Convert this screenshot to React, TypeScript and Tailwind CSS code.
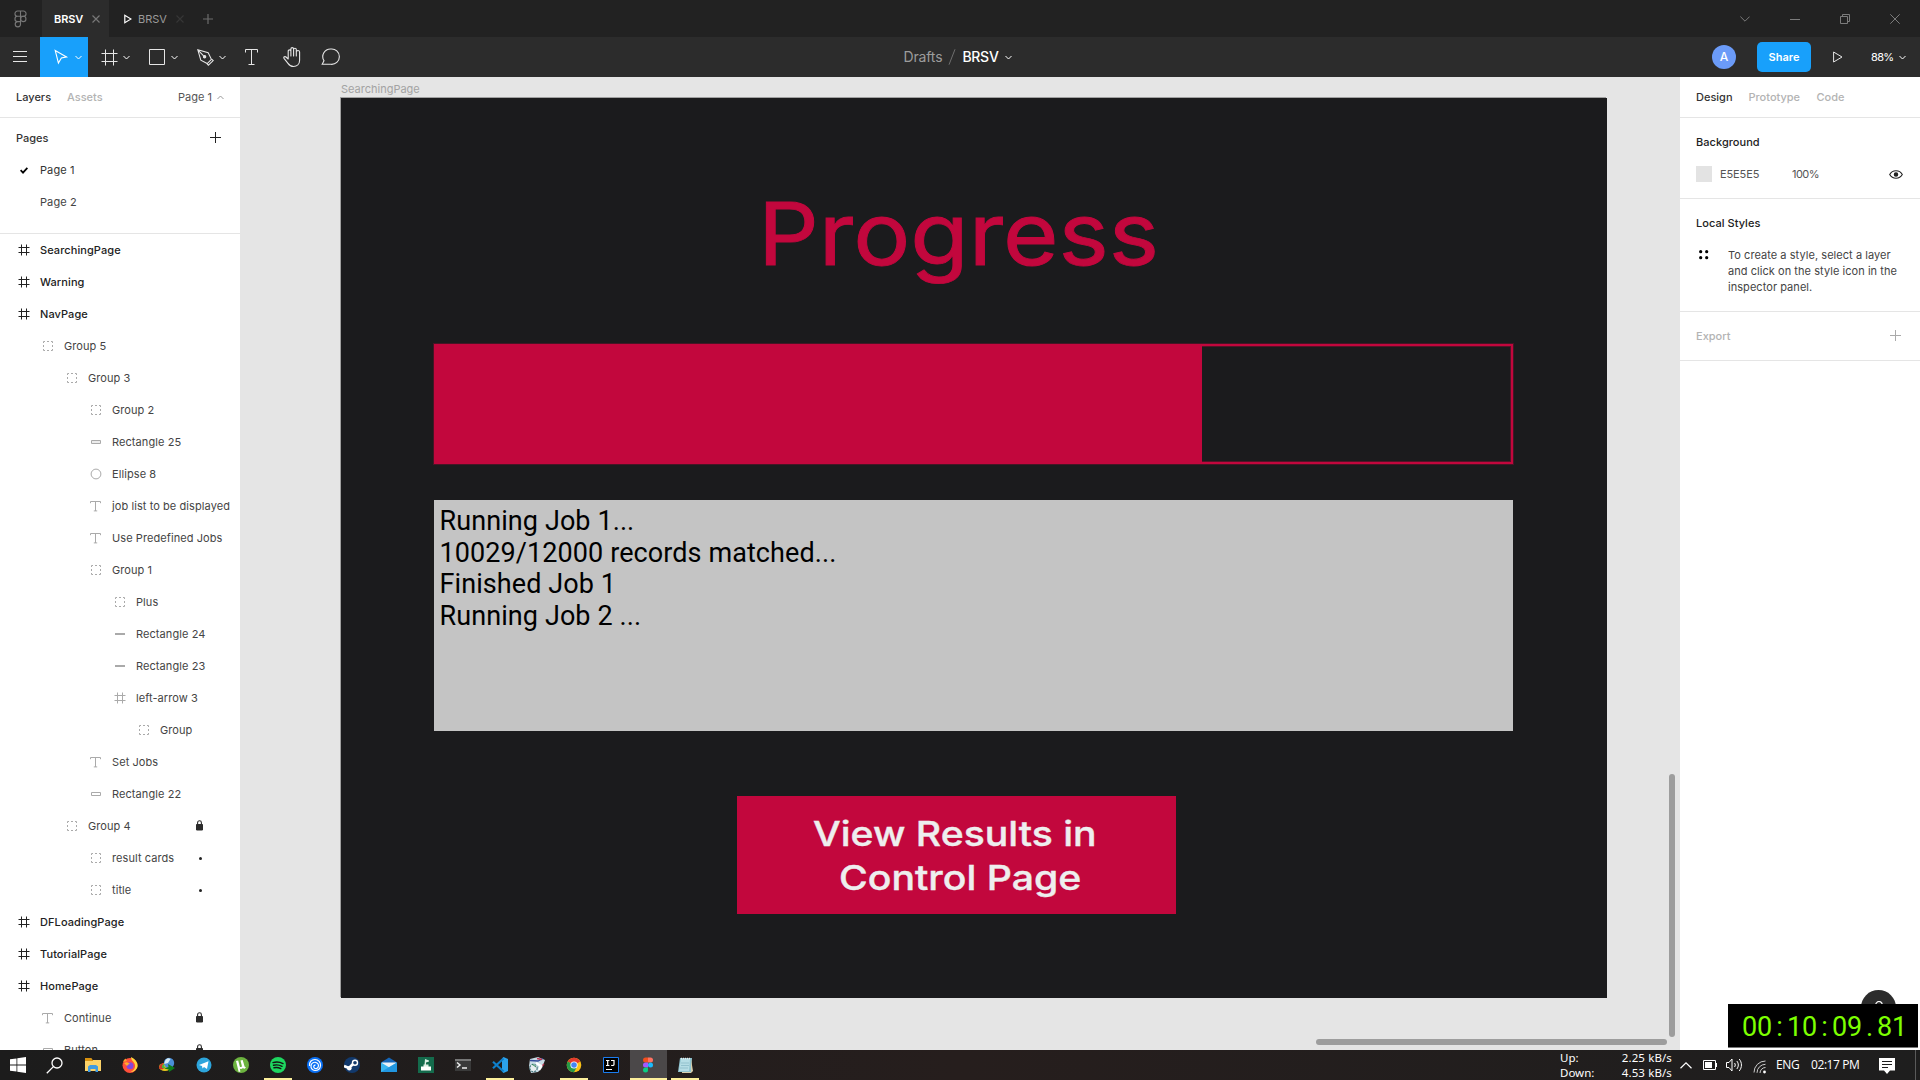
import type { ReactNode } from 'react';

type IconKind = 'frame' | 'group' | 'rect' | 'rectFill' | 'line' | 'ellipse' | 'text';

interface Layer {
  name: string;
  depth: number;
  icon: IconKind;
  mark?: 'lock' | 'dot';
}

const layers: Layer[] = [
  { name: 'SearchingPage', depth: 0, icon: 'frame' },
  { name: 'Warning', depth: 0, icon: 'frame' },
  { name: 'NavPage', depth: 0, icon: 'frame' },
  { name: 'Group 5', depth: 1, icon: 'group' },
  { name: 'Group 3', depth: 2, icon: 'group' },
  { name: 'Group 2', depth: 3, icon: 'group' },
  { name: 'Rectangle 25', depth: 3, icon: 'rectFill' },
  { name: 'Ellipse 8', depth: 3, icon: 'ellipse' },
  { name: 'job list to be displayed', depth: 3, icon: 'text' },
  { name: 'Use Predefined Jobs', depth: 3, icon: 'text' },
  { name: 'Group 1', depth: 3, icon: 'group' },
  { name: 'Plus', depth: 4, icon: 'group' },
  { name: 'Rectangle 24', depth: 4, icon: 'line' },
  { name: 'Rectangle 23', depth: 4, icon: 'line' },
  { name: 'left-arrow 3', depth: 4, icon: 'frame' },
  { name: 'Group', depth: 5, icon: 'group' },
  { name: 'Set Jobs', depth: 3, icon: 'text' },
  { name: 'Rectangle 22', depth: 3, icon: 'rect' },
  { name: 'Group 4', depth: 2, icon: 'group', mark: 'lock' },
  { name: 'result cards', depth: 3, icon: 'group', mark: 'dot' },
  { name: 'title', depth: 3, icon: 'group', mark: 'dot' },
  { name: 'DFLoadingPage', depth: 0, icon: 'frame' },
  { name: 'TutorialPage', depth: 0, icon: 'frame' },
  { name: 'HomePage', depth: 0, icon: 'frame' },
  { name: 'Continue', depth: 1, icon: 'text', mark: 'lock' },
  { name: 'Button', depth: 1, icon: 'rect', mark: 'lock' },
];

function Chevron({ className = '', up = false, w = 7 }: { className?: string; up?: boolean; w?: number }) {
  return (
    <svg width={w} height="5" viewBox="0 0 7 5" fill="none" stroke="currentColor" preserveAspectRatio="none" className={`shrink-0 ${className}`}>
      <path d={up ? 'M.5 4L3.5 1L6.5 4' : 'M.5 1L3.5 4L6.5 1'} />
    </svg>
  );
}

function LayerIcon({ kind }: { kind: IconKind }) {
  return (
    <svg width="12" height="12" viewBox="0 0 12 12" fill="none" stroke="currentColor" className="shrink-0">
      {kind === 'frame' && <path d="M3.5 .5v11M8.5 .5v11M.5 3.5h11M.5 8.5h11" />}
      {kind === 'group' && (
        <path d="M1.5 3v-1.5h1.5M5 1.5h2M9 1.5h1.5v1.5M10.5 5v2M10.5 9v1.5h-1.5M7 10.5h-2M3 10.5h-1.5v-1.5M1.5 7v-2" />
      )}
      {kind === 'rect' && <path d="M1.5 4.5h9v3h-9z" />}
      {kind === 'rectFill' && <path d="M1.5 4.5h9v3h-9z" fill="#ececec" />}
      {kind === 'line' && <path d="M1 6h10" strokeWidth="2" />}
      {kind === 'ellipse' && <circle cx="6" cy="6" r="4.9" />}
      {kind === 'text' && <path d="M.5 3.2V1.5h10v1.7M5.5 1.5v9.5M3.8 10.9h3.4" />}
    </svg>
  );
}

function LockIcon() {
  return (
    <svg width="8" height="11" viewBox="0 0 8 11" fill="none" className="mb-px">
      <path d="M.5 4.5h6v5.5h-6z" fill="#2b2b2b" stroke="#2b2b2b" />
      <path d="M1.6 4.500V2.700a1.900 1.900 0 0 1 3.800 0v1.800" stroke="#2b2b2b" strokeWidth="1.100" />
    </svg>
  );
}

function TitleBar() {
  return (
    <div className="flex h-[37px] items-center bg-[#222222] text-[11px] leading-4">
      <div className="flex w-[42px] justify-center pr-[2px] pt-px">
        <svg width="13" height="18" viewBox="0 0 13 18" fill="none" stroke="#777" strokeWidth="1.1">
          <path d="M6.5 1H3.6a2.65 2.65 0 0 0 0 5.3h2.9zM6.5 1h2.9a2.65 2.65 0 0 1 0 5.3H6.5zM6.5 6.3H3.6a2.65 2.65 0 0 0 0 5.3h2.9zM6.5 11.6H3.6a2.65 2.65 0 1 0 2.9 2.65z" />
          <circle cx="9.3" cy="8.95" r="2.65" />
        </svg>
      </div>
      <div className="flex h-full w-[67px] items-center bg-[#2c2c2c] pl-3 pt-px font-semibold text-white">
        <span className="w-[38px] tracking-[-0.01em]">BRSV</span>
        <svg width="8" height="8" viewBox="0 0 8 8" stroke="#777" strokeWidth="1.2"><path d="M.5 .5l7 7M7.5 .5l-7 7" /></svg>
      </div>
      <div className="flex items-center pl-[15px] pt-px text-[#9a9a9a]">
        <svg width="8" height="10" viewBox="0 0 8 10" fill="none" stroke="#fff" strokeWidth="1.2"><path d="M.8 1.2v7.6L7 5z" /></svg>
        <span className="ml-[6px] w-[38px]">BRSV</span>
        <svg width="8" height="8" viewBox="0 0 8 8" stroke="#363636" strokeWidth="1.2"><path d="M.5 .5l7 7M7.5 .5l-7 7" /></svg>
        <svg width="10" height="10" viewBox="0 0 10 10" stroke="#6c6c6c" strokeWidth="1.2" className="ml-[19px]"><path d="M5 0v10M0 5h10" /></svg>
      </div>
      <div className="ml-auto flex items-center gap-10 pr-5 text-[#7c7c7c]">
        <svg width="10" height="6" viewBox="0 0 10 6" fill="none" stroke="currentColor"><path d="M.4 .6L5 5.2L9.6 .6" /></svg>
        <svg width="10" height="10" viewBox="0 0 10 10" stroke="currentColor"><path d="M0 5.5h10" /></svg>
        <svg width="10" height="10" viewBox="0 0 10 10" fill="none" stroke="currentColor"><path d="M.5 2.5h7v7h-7zM2.5 2.5v-2h7v7h-2" /></svg>
        <svg width="10" height="10" viewBox="0 0 10 10" stroke="currentColor"><path d="M.3 .3l9.4 9.4M9.7 .3L.3 9.7" /></svg>
      </div>
    </div>
  );
}

function Tool({ children, active = false }: { children: ReactNode; active?: boolean }) {
  return (
    <div className={active ? 'flex h-10 w-12 items-center bg-[#18a0fb] pl-[14px]' : 'flex h-10 w-12 items-center pl-[13px]'}>
      <div className="flex w-[19px] justify-start">{children}</div>
      <Chevron className={active ? 'ml-[2px] mt-px' : 'ml-[3px] mt-px'} />
    </div>
  );
}

function ToolBar() {
  return (
    <div className="grid h-10 grid-cols-[1fr_auto_1fr] items-center bg-[#2c2c2c] text-white">
      <div className="flex items-center">
        <div className="flex w-10 pl-[13px]">
          <svg width="14" height="12" viewBox="0 0 14 12" stroke="#e6e6e6"><path d="M0 .5h14M0 5.5h14M0 10.5h14" /></svg>
        </div>
        <Tool active>
          <svg width="15" height="16" viewBox="0 0 15 16" fill="none" stroke="#fff" strokeWidth="1.1"><path d="M1.2 1.4L12.6 7.9L7.4 9L4.4 14z" /></svg>
        </Tool>
        <Tool>
          <svg width="17" height="17" viewBox="0 0 17 17" stroke="#e6e6e6"><path d="M4.5 .5v16M12.5 .5v16M.5 4.5h16M.5 12.5h16" /></svg>
        </Tool>
        <Tool>
          <svg width="17" height="17" viewBox="0 0 17 17" fill="none" stroke="#e6e6e6"><path d="M.5 .5h15v15h-15z" /></svg>
        </Tool>
        <Tool>
          <svg width="17" height="17" viewBox="0 0 17 17" fill="none" stroke="#e6e6e6" strokeWidth="1.05">
            <path d="M.8 .8L11.2 3.8L14.4 10.3L10.2 14.5L3.8 11.2zM.8 .8L6.6 6.8" />
            <circle cx="7.6" cy="7.8" r="1.2" fill="#e6e6e6" />
            <path d="M14.6 10.2l1.6 1.4-4.8 4.6-1.4-1.6" />
          </svg>
        </Tool>
        <svg width="14" height="17" viewBox="0 0 14 17" fill="none" stroke="#e6e6e6" className="ml-[13px]"><path d="M.5 3.5V.5h12v3M6.5 .5v15.5M3.5 15.5h6" /></svg>
        <svg width="19" height="21" viewBox="0 0 19 21" fill="none" stroke="#e6e6e6" strokeWidth="1.1" strokeLinecap="round" strokeLinejoin="round" className="ml-[24px]">
          <path d="M5.2 11.5V4.2a1.3 1.3 0 0 1 2.7 0V9M7.9 9V2a1.35 1.35 0 0 1 2.7 0v7M10.600 9V2.600a1.350 1.350 0 0 1 2.700 0V9M13.300 9V5.200a1.500 1.500 0 0 1 3.300-.1v8.200c0 4-2.800 6.200-6.100 6.200-2.600 0-4.100-1-5.500-3.100L1 11.300c-.7-1.3.9-2.3 2-1.3l2.200 2" />
        </svg>
        <svg width="19" height="18" viewBox="0 0 19 18" fill="none" stroke="#e6e6e6" strokeWidth="1.1" className="ml-[19px]">
          <path d="M9.8 1A7.7 7.7 0 1 1 9.8 16.3H1.2L3 12.8A7.7 7.7 0 0 1 9.8 1z" />
        </svg>
      </div>
      <div className="flex items-center pr-[5px] text-[14px] leading-5">
        <span className="tracking-[-0.01em] text-[#9c9c9c]">Drafts</span>
        <svg width="8" height="16" viewBox="0 0 8 16" stroke="#6f6f6f" className="ml-[6px]"><path d="M7 .3L1 15.7" /></svg>
        <span className="ml-[6px] font-medium tracking-[-0.02em]">BRSV</span>
        <Chevron className="ml-[6px] mt-px" />
      </div>
      <div className="flex items-center justify-end pr-[14px] text-[11px] leading-4">
        <div className="flex size-6 items-center justify-center rounded-full bg-[#6b9bf8] text-[12px] font-medium">A</div>
        <div className="ml-[21px] flex h-[30px] w-[54px] items-center justify-center rounded-[5px] bg-[#18a0fb] font-semibold">Share</div>
        <svg width="10" height="12" viewBox="0 0 10 12" fill="none" stroke="#e6e6e6" className="ml-[22px]"><path d="M.6 1v10L9 6z" /></svg>
        <span className="ml-[28px] w-[28px] font-normal tracking-[-0.06em]">88%</span>
        <Chevron className="mt-px" />
      </div>
    </div>
  );
}

function LeftPanel() {
  return (
    <div className="flex w-60 shrink-0 flex-col overflow-hidden bg-white text-[11px] leading-4 text-[#333]">
      <div className="flex h-[41px] shrink-0 items-center border-b border-[#e5e5e5] px-4">
        <span className="w-[51px] font-medium">Layers</span>
        <span className="font-medium text-[#b3b3b3]">Assets</span>
        <span className="ml-auto text-[#555]">Page 1</span>
        <Chevron up className="ml-[5px] text-[#999]" />
      </div>
      <div className="flex h-[116px] shrink-0 flex-col border-b border-[#e5e5e5] pt-1">
        <div className="flex h-8 items-center justify-between pl-4 pr-[19px]">
          <span className="font-medium">Pages</span>
          <svg width="11" height="11" viewBox="0 0 11 11" stroke="#222" className="mb-[2px]"><path d="M5.5 0v11M0 5.5h11" /></svg>
        </div>
        <div className="flex h-8 items-center pl-5">
          <svg width="8" height="7" viewBox="0 0 8 7" fill="none" stroke="#000" strokeWidth="1.8"><path d="M.6 3.2L3 5.6L7.4 .9" /></svg>
          <span className="ml-3 tracking-[0.09px]">Page 1</span>
        </div>
        <div className="flex h-8 items-center pl-10 tracking-[0.09px] text-[#444]">Page 2</div>
      </div>
      <div className="flex flex-col">
        {layers.map((l) => (
          <div key={l.name} className="flex h-8 shrink-0 items-center pr-9" style={{ paddingLeft: 18 + l.depth * 24 }}>
            <span className={l.depth === 0 ? 'text-[#222]' : 'text-[#aaa]'}>
              <LayerIcon kind={l.icon} />
            </span>
            <span className={l.depth === 0 ? 'ml-[10px] whitespace-nowrap font-medium tracking-[0.08px] text-[#222]' : 'ml-[10px] whitespace-nowrap tracking-[0.08px] text-[#444]'}>{l.name}</span>
            {l.mark === 'lock' && <span className="ml-auto"><LockIcon /></span>}
            {l.mark === 'dot' && <span className="ml-auto mr-[2px] size-[3px] rounded-full bg-[#222]" />}
          </div>
        ))}
      </div>
    </div>
  );
}

function Canvas() {
  return (
    <div className="relative flex-1 overflow-hidden bg-[#e5e5e5]">
      <span className="absolute left-[101px] top-1 text-[11px] leading-4 text-[#a3a3a3]">SearchingPage</span>
      <div className="absolute left-[101px] top-[21px] h-[900px] w-[1266px] bg-[#1b1b1d] shadow-[-1px_-1px_0_0_rgba(0,0,0,0.3)]">
        <div className="absolute left-[416.5px] top-[86px] origin-left scale-x-[1.095] whitespace-nowrap text-[87px] font-normal leading-[100px] text-[#c2073d] [-webkit-text-stroke:0.9px_#c2073d]">
          Progress
        </div>
        <div className="absolute left-[93px] top-[246px] flex h-[120px] w-[1079px] border-2 border-[#c2073d] shadow-[0_0_0_1px_#c2073d44,inset_0_0_0_1px_#c2073d55]">
          <div className="w-[766px] bg-[#c2073d]" />
        </div>
        <div className="absolute left-[93px] top-[402px] h-[231px] w-[1079px] bg-[#c4c4c4] pl-[5.5px] pt-[6px] font-['Roboto'] text-[27px] leading-[31.67px] tracking-[0.09px] text-black">
          <p>Running Job 1...</p>
          <p>10029/12000 records matched...</p>
          <p>Finished Job 1</p>
          <p>Running Job 2 ...</p>
        </div>
        <div className="absolute left-[396px] top-[698px] flex h-[118px] w-[439px] flex-col bg-[#c2073d] pt-[16px] text-[34.4px] font-medium leading-[44px] text-[#eeeeee] [-webkit-text-stroke:0.4px_#eeeeee]">
          <span className="ml-[75.5px] origin-left scale-x-[1.138] whitespace-nowrap">View Results in</span>
          <span className="ml-[101.5px] origin-left scale-x-[1.14] whitespace-nowrap">Control Page</span>
        </div>
      </div>
      <div className="absolute bottom-[13px] right-[5px] h-[263px] w-[6px] rounded-full bg-[#9d9d9d]" />
      <div className="absolute bottom-[5px] right-[13px] h-[6px] w-[351px] rounded-full bg-[#9d9d9d]" />
    </div>
  );
}

function RightPanel() {
  return (
    <div className="relative flex w-60 shrink-0 flex-col bg-white text-[11px] leading-4 text-[#333]">
      <div className="flex h-[41px] items-center border-b border-[#e5e5e5] pl-4 font-medium">
        <span className="w-[52.5px]">Design</span>
        <span className="w-[68px] text-[#b3b3b3]">Prototype</span>
        <span className="text-[#b3b3b3]">Code</span>
      </div>
      <div className="flex h-[81px] flex-col border-b border-[#e5e5e5] pl-4 pt-2">
        <div className="flex h-8 items-center font-medium tracking-[0.04px] text-[#222]">Background</div>
        <div className="flex h-8 items-center text-[#555]">
          <span className="size-4 bg-[#e3e3e3]" />
          <span className="ml-2 w-[72px] tracking-[-0.01em]">E5E5E5</span>
          <span className="tracking-[-0.05em]">100%</span>
          <svg width="14" height="9" viewBox="0 0 14 9" fill="none" stroke="#222" strokeWidth="1.1" className="ml-auto mr-[17px]">
            <path d="M.7 4.5C3.5-.5 10.5-.5 13.3 4.5C10.5 9.5 3.5 9.5 .7 4.5z" />
            <circle cx="7" cy="4.5" r="1.7" fill="#222" />
          </svg>
        </div>
      </div>
      <div className="flex h-[113px] flex-col border-b border-[#e5e5e5] pl-4 pt-2">
        <div className="flex h-8 items-center font-medium tracking-[0.04px] text-[#222]">Local Styles</div>
        <div className="flex pt-2">
          <svg width="10" height="10" viewBox="0 0 10 10" className="ml-[3px] mt-[3px]">
            <circle cx="1.7" cy="1.7" r="1.6" /><circle cx="7.7" cy="1.7" r="1.6" /><circle cx="1.7" cy="7.7" r="1.6" /><circle cx="7.7" cy="7.7" r="1.6" />
          </svg>
          <div className="ml-[19px] whitespace-nowrap tracking-[0.05px] text-[#444]">
            <p>To create a style, select a layer</p>
            <p>and click on the style icon in the</p>
            <p>inspector panel.</p>
          </div>
        </div>
      </div>
      <div className="flex h-[49px] items-center justify-between border-b border-[#e5e5e5] pl-4 pr-[19px]">
        <span className="font-medium text-[#b3b3b3]">Export</span>
        <svg width="11" height="11" viewBox="0 0 11 11" stroke="#aaa" className="mb-px"><path d="M5.5 0v11M0 5.5h11" /></svg>
      </div>
      <div className="absolute bottom-[25px] right-[24px] flex size-[35px] justify-center rounded-full bg-[#2c2c2c] pt-[11px]">
        <svg width="8" height="13" viewBox="0 0 8 13" fill="none" stroke="#fff" strokeWidth="1.200"><path d="M.7 3.800a3.300 3.300 0 1 1 5 2.800C4.500 7.300 4 7.700 4 9M4 11v1.500" /></svg>
      </div>
      <div className="absolute bottom-[2px] right-[2px] flex h-[44px] w-[190px] border-b border-[#777] bg-black pl-[14px] pt-[4px] font-['Roboto'] text-[27px] leading-[38px] text-[#7dff00]">
        {'00:10:09.81'.split('').map((c, i) => (
          <span key={i} className="flex w-[15px] justify-center">{c}</span>
        ))}
      </div>
    </div>
  );
}

const taskApps: { id: string; state?: 'open' | 'active'; icon: ReactNode }[] = [
  { id: 'explorer', icon: <><path d="M0 1h6l1.500 2H16v11H0z" fill="#fbd268" /><path d="M0 1h6l1.500 2H8v1H0z" fill="#d9920f" /><path d="M3 15V9.500L5 8h6l2 1.500V15h-2.500v-3h-5v3z" fill="#3f9be0" /></> },
  { id: 'firefox', icon: <><circle cx="8" cy="8.500" r="7.500" fill="#ff4f3a" /><path d="M9 0c5 2.500 7 6 6.500 10-1 3-4 5-7 5 4-1.500 5.500-5 4-8.500C11 4 9 3 9 0z" fill="#ffd43a" /><path d="M1 5C2 2.500 3 2 3.500 1.500L5 4z" fill="#ffa02c" /><circle cx="8" cy="8.700" r="3.500" fill="#8546dd" /><path d="M2 6c3-2 5 0 6 1-2 0-2 1-3 2z" fill="#ffab2e" /></> },
  { id: 'idm', icon: <><ellipse cx="6" cy="10" rx="6" ry="4" fill="#e8c91d" /><circle cx="10" cy="6" r="5.200" fill="#4a8fd8" /><path d="M6.500 3c1.500-2 3.500-2 5-1l-2.500 4-4 1z" fill="#d8ecf5" /><path d="M0 11c0-3 3-5 5-5-2 2-2 4 0 5.500C3 13 0 12.500 0 11z" fill="#ce3b26" /><path d="M3 11c-.5-2 1-4 2.500-4.500C4.500 8.500 5 10 7 11z" fill="#48b83a" /><path d="M9 7l7 4-6 4-.5-2.500L5 11.500l4.500-1.500z" fill="#0f7d1c" /></> },
  { id: 'telegram', icon: <><circle cx="8" cy="8" r="7.500" fill="#2da5dc" /><path d="M3 8l9.500-3.800L11 12 8 10l-1.500 1.500L6 9z" fill="#fff" /></> },
  { id: 'utorrent', icon: <><circle cx="8" cy="8" r="8" fill="#6cb33f" /><path d="M3 4l2.200-.5 1.600 6c.4 1 2.400.8 2-.8L7.500 3.500l2.200-.5 1.900 6.500 1.400 1-1.500 1.200c-.8 0-1.200-.3-1.500-.8-1 1-2 1.200-3.200.9l.6 2.700-1.700.5z" fill="#fff" /></> },
  { id: 'spotify', state: 'open', icon: <><circle cx="8" cy="8" r="8" fill="#1ed760" /><path d="M3 5.600c3.500-1 7-.6 10 1M3.500 8.300c3-.8 5.800-.5 8.500 1M4 10.800c2.500-.6 4.700-.3 6.800.8" stroke="#141414" strokeWidth="1.400" fill="none" strokeLinecap="round" /></> },
  { id: 'ubisoft', icon: <><circle cx="8" cy="8" r="8" fill="#0a70f5" /><path d="M2.500 9C2 5 4.500 2.500 8 2.500s5.800 3 5.500 6S11 13.500 8 13.500 3.800 11 4 8.800 6 5 8.500 5.300s3.500 2.700 2.700 4.700-3 2-4 .8-.4-2.800 1.300-2.600" stroke="#fff" strokeWidth="1.200" fill="none" /></> },
  { id: 'steam', icon: <><circle cx="8" cy="8" r="8" fill="#12396c" /><path d="M0 9l5 2 4-4" stroke="#fff" strokeWidth="2.600" fill="none" /><circle cx="5.300" cy="11.300" r="2.300" fill="#fff" /><circle cx="11" cy="5.700" r="2.500" fill="#12396c" stroke="#fff" strokeWidth="1.400" /></> },
  { id: 'mail', icon: <><path d="M0 5.500L8 .5l8 5V15H0z" fill="#1566b8" /><path d="M1 5.500h14v3L8 11 1 8.500z" fill="#e9f1f8" /><path d="M0 5.500l8 4.800 8-4.800V15H0z" fill="#39b5f0" /><path d="M0 15L16 5.500V15z" fill="#2196e0" /></> },
  { id: 'golf', icon: <><path d="M0 0h16v16H0z" fill="#146b4c" /><path d="M7 2l4 1.500v1L8 5.500V8H6.500zM5.500 7.500h5v2.500h-5z" fill="#dcefe4" /><path d="M3 9.500h10v4H3z" fill="#fff" /></> },
  { id: 'terminal', icon: <><path d="M0 2h16v12H0z" fill="#3a3a3a" /><path d="M0 2h16v2H0z" fill="#777" /><path d="M2 5.500l3 2.500-3 2.500M7 11h5" stroke="#eee" strokeWidth="1.500" fill="none" /></> },
  { id: 'vscode', state: 'open', icon: <><path d="M11.500 0L16 2v12l-4.500 2L10 14.500V1.500z" fill="#2ba2ec" /><path d="M11.500 1.500L1 11.200M1 4.800l10.500 9.700" stroke="#0f80cb" strokeWidth="2.200" /></> },
  { id: 'bike', icon: <><path d="M1 2l8-2 7 3-3 8-4 4-7 1L0 9z" fill="#c9dce6" /><circle cx="4.500" cy="11" r="3.700" fill="#e8eef0" stroke="#4d7f86" strokeWidth="1.200" strokeDasharray="2 1" /><path d="M1 3.500l8 .5 5-2.500" stroke="#334a9a" strokeWidth="1.300" fill="none" /><path d="M8 1.500l5 1M13 9l2-2" stroke="#bd3550" strokeWidth="1.300" /><path d="M7 6l5 3-2 4" stroke="#fff" strokeWidth="2.400" fill="none" /><path d="M3 7l4 3" stroke="#2d8a55" strokeWidth="1" /></> },
  { id: 'chrome', state: 'open', icon: <><circle cx="8" cy="8" r="7.300" fill="#fbc116" /><path d="M8 8L1.700 4.400A7.300 7.300 0 0 1 14.300 4.400z" fill="#e33b2e" /><path d="M8 8L1.700 4.400A7.300 7.300 0 0 0 8 15.300L11 9.800z" fill="#269a48" /><circle cx="8" cy="8" r="3.600" fill="#fff" /><circle cx="8" cy="8" r="2.800" fill="#4285f4" /></> },
  { id: 'intellij', icon: <><path d="M.5 .5h15v15H.5z" fill="#000" stroke="#1c7df0" /><path d="M3 3.500h3.400M4.700 3.500v5M3 8.500h3.400M8 3.500h3v4c0 1-1.500 1.300-2.800.7M3 12.500h6" stroke="#fff" strokeWidth="1.200" fill="none" /></> },
  { id: 'figma', state: 'active', icon: <><path d="M8 .5H5.500a2.500 2.500 0 0 0 0 5H8z" fill="#f24e1e" /><path d="M8 .5h2.500a2.500 2.500 0 0 1 0 5H8z" fill="#ff7262" /><path d="M8 5.500H5.500a2.500 2.500 0 0 0 0 5H8z" fill="#a259ff" /><circle cx="10.500" cy="8" r="2.500" fill="#1abcfe" /><path d="M8 10.500H5.500A2.500 2.500 0 1 0 8 13z" fill="#0acf83" /></> },
  { id: 'notepad', state: 'open', icon: <><path d="M3 1h12l-1 14H1z" fill="#8fc3cf" /><path d="M4 2h9l-1 12H2z" fill="#b5dde5" /><path d="M14 2l2 12-2 2H5v-1h9z" fill="#d8cfae" /><path d="M4 1.500h10" stroke="#eee" strokeWidth="1.500" strokeDasharray="1 1" /><path d="M4 6h8M4 8.500h8M3 11h8" stroke="#7cb0bd" strokeWidth=".6" /></> },
];

function TaskBar() {
  return (
    <div className="flex h-[30px] items-center bg-linear-to-r from-[#1c1c1c] via-[#261e1d] to-[#1e1e1e] text-white">
      <div className="flex w-9 justify-center">
        <svg width="16" height="16" viewBox="0 0 16 16" fill="#fff"><path d="M0 2.300L6.500 1.400V7.500H0zM7.300 1.300L16 0v7.500H7.300zM0 8.400h6.500v6.200L0 13.700zM7.300 8.400H16V16l-8.700-1.200z" /></svg>
      </div>
      <div className="flex w-[38.5px] pl-[10px]">
        <svg width="17" height="17" viewBox="0 0 17 17" fill="none" stroke="#fff" strokeWidth="1.300"><circle cx="11" cy="6" r="5" /><path d="M7.400 9.600L.8 16.200" /></svg>
      </div>
      {taskApps.map((a) => (
        <div key={a.id} className={a.state === 'active' ? 'flex h-[30px] w-[37px] flex-col items-center bg-[#4b4849] pt-[7px]' : 'flex h-[30px] w-[37px] flex-col items-center pt-[7px]'}>
          <svg width="16" height="16" viewBox="0 0 16 16">{a.icon}</svg>
          {a.state === 'open' && <span className="mt-[5px] h-[2px] w-7 bg-[#fdf09c]" />}
          {a.state === 'active' && <span className="mt-[5px] h-[2px] w-full bg-[#fdf09c]" />}
        </div>
      ))}
      <div className="ml-auto flex h-full items-center">
        <div className="flex w-[112px] flex-col font-['Noto_Sans'] text-[11.5px] leading-[15px]">
          <div className="flex justify-between"><span>Up:</span><span className="tracking-[0.01em]">2.25 kB/s</span></div>
          <div className="flex justify-between"><span>Down:</span><span className="tracking-[0.01em]">4.53 kB/s</span></div>
        </div>
        <svg width="12" height="7" viewBox="0 0 12 7" fill="none" stroke="#fff" strokeWidth="1.200" className="ml-[8px]"><path d="M.5 6.300L6 .9L11.500 6.300" /></svg>
        <svg width="15" height="10" viewBox="0 0 15 10" fill="none" stroke="#fff" className="ml-[11px]"><path d="M.5 .5h12v9H.5zM13.500 3v4" /><path d="M2 2h7v6H2z" fill="#fff" stroke="none" /></svg>
        <svg width="17" height="14" viewBox="0 0 17 14" fill="none" stroke="#fff" className="ml-2"><path d="M.5 4.500h2.500l3-3.500v12l-3-3.500H.5zM8.500 5c1 1.200 1 2.800 0 4M10.800 3c2 2.400 2 5.600 0 8M13.200 1c3 3.500 3 8.500 0 12" /></svg>
        <svg width="14" height="14" viewBox="0 0 14 14" fill="none" stroke="#ccc" className="ml-[10px] mt-1"><path d="M1 12.500A11.500 11.500 0 0 1 12.500 1M4 12.800A8.500 8.500 0 0 1 12.500 4.300M7 13A5.600 5.600 0 0 1 12.500 7.500" /><circle cx="11.500" cy="12" r="1.400" fill="#fff" stroke="none" /></svg>
        <span className="ml-[9px] w-[35px] font-['Open_Sans'] text-[12px] leading-4 tracking-[-0.03em]">ENG</span>
        <span className="w-[49px] whitespace-nowrap font-['Open_Sans'] text-[12px] leading-4 tracking-[-0.035em]">02:17 PM</span>
        <svg width="16" height="16" viewBox="0 0 16 16" className="ml-[19px] mt-[2px]"><path d="M0 0h16v12.500h-5L8 16l-3-3.500H0z" fill="#fff" /><path d="M3 3.500h10M3 6.500h10M3 9.500h6" stroke="#1e1e1e" /></svg>
        <span className="ml-[20px] mr-[4px] h-full w-px bg-[#5a5a5a]" />
      </div>
    </div>
  );
}

export default function App() {
  return (
    <div className="flex h-[1080px] w-[1920px] flex-col overflow-hidden font-['Inter',sans-serif]">
      <TitleBar />
      <ToolBar />
      <div className="flex h-[973px] overflow-hidden">
        <LeftPanel />
        <Canvas />
        <RightPanel />
      </div>
      <TaskBar />
    </div>
  );
}
